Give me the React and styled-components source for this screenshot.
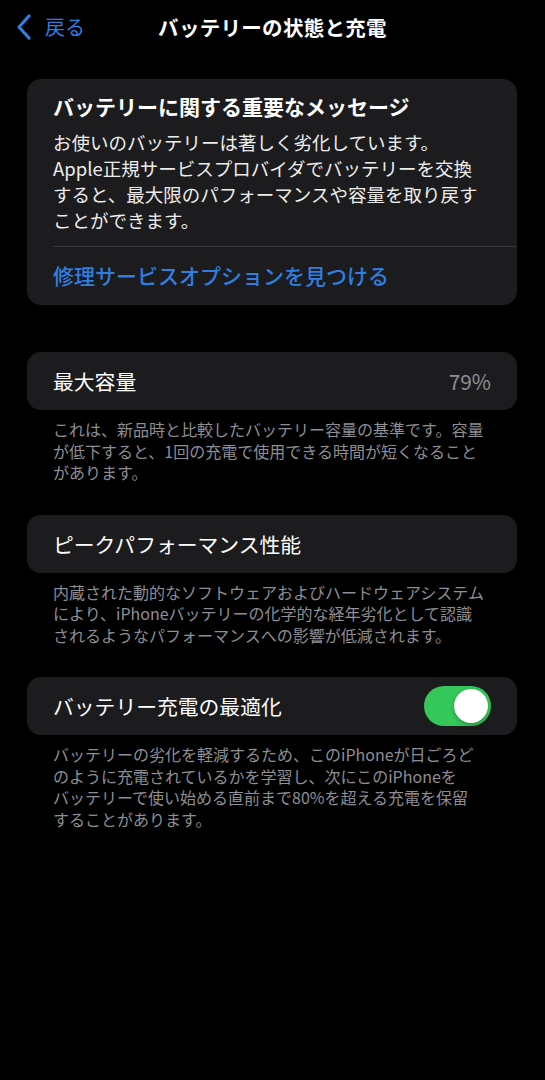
import React, { useState } from "react";
import styled, { createGlobalStyle } from "styled-components";

const Global = createGlobalStyle`
  html, body {
    margin: 0;
    padding: 0;
    background: #000;
  }
  body {
    font-family: "Noto Sans CJK JP", "Noto Sans", sans-serif;
    color: #fff;
  }
`;

const Page = styled.div`
  width: 545px;
  min-height: 1080px;
  background: #000;
  box-sizing: border-box;
`;

const NavBar = styled.div`
  position: relative;
  height: 54px;
  display: flex;
  align-items: center;
  justify-content: center;
`;

const Back = styled.div`
  position: absolute;
  left: 16px;
  top: 12px;
  display: flex;
  align-items: center;
  gap: 13px;
  color: #2f7ee0;
  font-size: 20px;
`;

const Title = styled.div`
  font-size: 20.5px;
  font-weight: 700;
  letter-spacing: 0.3px;
  margin-top: -1px;
`;

const Content = styled.div`
  padding: 25px 28px 0 27px;
  display: flex;
  flex-direction: column;
`;

const Card = styled.div`
  background: #1c1c1e;
  border-radius: 14px;
  overflow: hidden;
  margin-bottom: ${(p) => p.$mb || 0}px;
`;

const MessageBody = styled.div`
  padding: 12px 20px 13px 26px;
`;

const MessageTitle = styled.div`
  font-size: 21px;
  font-weight: 700;
  line-height: 30px;
  margin-bottom: 8px;
`;

const MessageText = styled.div`
  font-size: 18.5px;
  line-height: 26px;
  color: #ececec;
`;

const Divider = styled.div`
  height: 1px;
  background: #38383a;
  margin-left: 26px;
`;

const LinkRow = styled.div`
  padding: 13px 26px 15px;
  font-size: 21px;
  line-height: 30px;
  color: #2f7ee0;
  font-weight: 500;
`;

const Row = styled.div`
  height: 58px;
  display: flex;
  align-items: center;
  justify-content: space-between;
  padding: 0 26px;
  font-size: 20.8px;
`;

const Value = styled.span`
  color: #8e8e93;
  font-size: 20.8px;
`;

const Footer = styled.div`
  padding: 9px 26px 0 26px;
  font-size: 16px;
  line-height: 21.5px;
  color: #8e8e93;
  margin-bottom: ${(p) => p.$mb || 0}px;
`;

const Switch = styled.button`
  width: 67px;
  height: 40px;
  border-radius: 20px;
  border: none;
  padding: 0;
  background: ${(p) => (p.$on ? "#34c759" : "#39393d")};
  position: relative;
  cursor: pointer;
`;

const Knob = styled.span`
  position: absolute;
  top: 3px;
  left: ${(p) => (p.$on ? 30 : 3)}px;
  width: 34px;
  height: 34px;
  border-radius: 50%;
  background: #fff;
  box-shadow: 0 2px 4px rgba(0, 0, 0, 0.25);
  transition: left 0.2s;
`;

function Chevron() {
  return (
    <svg width="16" height="26" viewBox="0 0 16 26">
      <path d="M13 2 L3 13 L13 24" fill="none" stroke="#2f7ee0" strokeWidth="3.2" strokeLinecap="round" strokeLinejoin="round" />
    </svg>
  );
}

export default function App() {
  let [on, setOn] = useState(true);
  return (
    <Page>
      <Global />
      <NavBar>
        <Back>
          <Chevron />
          <span>戻る</span>
        </Back>
        <Title>バッテリーの状態と充電</Title>
      </NavBar>
      <Content>
        <Card $mb={47}>
          <MessageBody>
            <MessageTitle>バッテリーに関する重要なメッセージ</MessageTitle>
            <MessageText>
              お使いのバッテリーは著しく劣化しています。<br />
              Apple正規サービスプロバイダでバッテリーを交換<br />
              すると、最大限のパフォーマンスや容量を取り戻す<br />
              ことができます。
            </MessageText>
          </MessageBody>
          <Divider />
          <LinkRow>修理サービスオプションを見つける</LinkRow>
        </Card>

        <Card>
          <Row>
            <span>最大容量</span>
            <Value>79%</Value>
          </Row>
        </Card>
        <Footer $mb={31}>
          これは、新品時と比較したバッテリー容量の基準です。容量<br />
          が低下すると、1回の充電で使用できる時間が短くなること<br />
          があります。
        </Footer>

        <Card>
          <Row>
            <span>ピークパフォーマンス性能</span>
          </Row>
        </Card>
        <Footer $mb={31}>
          内蔵された動的なソフトウェアおよびハードウェアシステム<br />
          により、iPhoneバッテリーの化学的な経年劣化として認識<br />
          されるようなパフォーマンスへの影響が低減されます。
        </Footer>

        <Card>
          <Row>
            <span>バッテリー充電の最適化</span>
            <Switch $on={on} onClick={() => setOn(!on)}>
              <Knob $on={on} />
            </Switch>
          </Row>
        </Card>
        <Footer>
          バッテリーの劣化を軽減するため、このiPhoneが日ごろど<br />
          のように充電されているかを学習し、次にこのiPhoneを<br />
          バッテリーで使い始める直前まで80%を超える充電を保留<br />
          することがあります。
        </Footer>
      </Content>
    </Page>
  );
}
